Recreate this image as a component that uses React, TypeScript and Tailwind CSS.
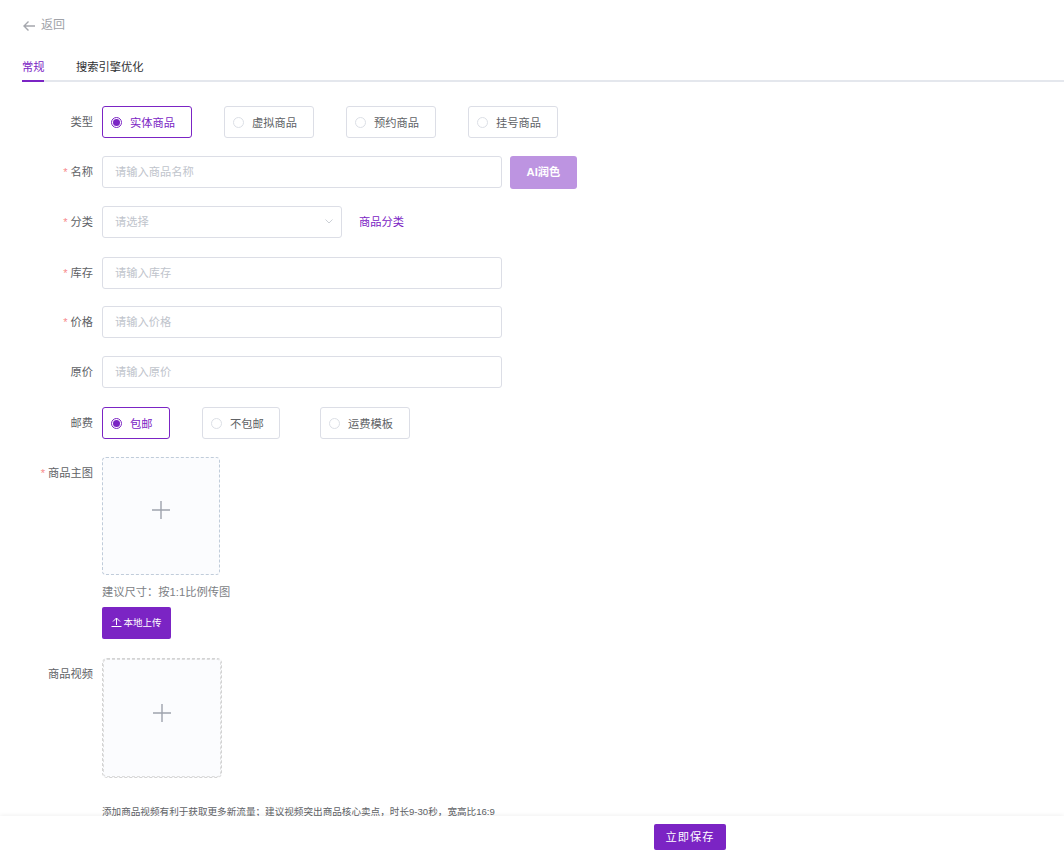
import React from "react";

function Req() {
  return <span className="mr-[3px] text-[#f78989] text-[11px]">*</span>;
}

function Label({ req, children }: { req?: boolean; children: React.ReactNode }) {
  return (
    <div className="w-[71px] shrink-0 mr-[9px] text-right text-[11.25px] leading-[16px] text-[#606266] pt-[8px] whitespace-nowrap">
      {req && <Req />}
      {children}
    </div>
  );
}

function Radio({ label, active, w, mr }: { label: string; active?: boolean; w: string; mr: string }) {
  return (
    <div
      className={`h-[32px] ${w} ${mr} flex items-center pl-[8px] rounded-[3px] border text-[11.25px] ${
        active ? "border-[#7b24c4] text-[#7b24c4]" : "border-[#dcdee6] text-[#606266]"
      }`}
    >
      <span
        className={`w-[11px] h-[11px] rounded-full border flex items-center justify-center mr-[8px] ${
          active ? "border-[#7b24c4]" : "border-[#dcdfe6]"
        }`}
      >
        {active && <span className="w-[7px] h-[7px] rounded-full bg-[#7b24c4]" />}
      </span>
      <span className="pt-[3px]">{label}</span>
    </div>
  );
}

function Input({ ph, w = "w-[400px]" }: { ph: string; w?: string }) {
  return (
    <div className={`h-[32px] ${w} rounded-[3px] border border-[#dcdee6] bg-white flex items-center pl-[12px] pt-[1px] text-[11.25px] text-[#c0c4cc]`}>
      {ph}
    </div>
  );
}

function Plus() {
  return (
    <svg width="18" height="18" viewBox="0 0 18 18" className="text-[#9ea3ad]">
      <path d="M0 9h18M9 0v18" stroke="currentColor" strokeWidth="1.4" fill="none" />
    </svg>
  );
}

export default function App() {
  return (
    <div className="h-[858px] overflow-hidden relative bg-white font-['Liberation_Sans','Noto_Sans_CJK_SC',sans-serif]">
      <div className="pl-[22px]">
        <div className="pt-[16px] h-[50px] flex items-start text-[12px] text-[#a0a2a8]">
          <div className="flex items-center h-[18px]">
            <svg width="14" height="14" viewBox="0 0 14 14" className="mr-[5px] mt-[1px]" fill="none" stroke="#a5a7ad" strokeWidth="1.4">
              <path d="M13 7H2M6.5 2.5 2 7l4.5 4.5" />
            </svg>
            <span>返回</span>
          </div>
        </div>
        <div className="h-[32px] flex border-b-2 border-[#e4e7ed] text-[11.25px]">
          <div className="h-[32px] w-[22px] border-b-2 border-[#7b24c4] text-[#7b24c4] pt-[9px] leading-[16px] whitespace-nowrap">常规</div>
          <div className="ml-[32px] pt-[9px] leading-[16px] text-[#303133] whitespace-nowrap">搜索引擎优化</div>
        </div>
      </div>

      <div className="pl-[22px] pt-[24px]">
        <div className="flex mb-[18px]">
          <Label>类型</Label>
          <Radio label="实体商品" active w="w-[90px]" mr="mr-[32px]" />
          <Radio label="虚拟商品" w="w-[90px]" mr="mr-[32px]" />
          <Radio label="预约商品" w="w-[90px]" mr="mr-[32px]" />
          <Radio label="挂号商品" w="w-[90px]" mr="mr-[0px]" />
        </div>
        <div className="flex mb-[17px]">
          <Label req>名称</Label>
          <Input ph="请输入商品名称" />
          <div className="ml-[8px] w-[67px] h-[33px] rounded-[3px] bg-[#bd94e1] text-white text-[11.25px] font-semibold flex items-center justify-center">
            AI润色
          </div>
        </div>
        <div className="flex mb-[19px] items-start">
          <Label req>分类</Label>
          <div className="relative">
            <Input ph="请选择" w="w-[240px]" />
            <svg width="8" height="5" viewBox="0 0 8 5" className="absolute right-[9px] top-[13px]" fill="none" stroke="#ccd0d6" strokeWidth="1">
              <path d="M0.5 0.5 4 4l3.5-3.5" />
            </svg>
          </div>
          <div className="ml-[17px] pt-[8px] leading-[16px] text-[11.25px] text-[#7b24c4]">商品分类</div>
        </div>
        <div className="flex mb-[17px]">
          <Label req>库存</Label>
          <Input ph="请输入库存" />
        </div>
        <div className="flex mb-[18px]">
          <Label req>价格</Label>
          <Input ph="请输入价格" />
        </div>
        <div className="flex mb-[19px]">
          <Label>原价</Label>
          <Input ph="请输入原价" />
        </div>
        <div className="flex mb-[18px]">
          <Label>邮费</Label>
          <Radio label="包邮" active w="w-[68px]" mr="mr-[32px]" />
          <Radio label="不包邮" w="w-[78px]" mr="mr-[40px]" />
          <Radio label="运费模板" w="w-[90px]" mr="mr-[0px]" />
        </div>
        <div className="flex mb-[19px]">
          <Label req>商品主图</Label>
          <div>
            <div className="w-[118px] h-[118px] pb-[12px] rounded-[4px] border border-dashed border-[#c0ccda] bg-[#fbfcfe] flex items-center justify-center">
              <Plus />
            </div>
            <div className="mt-[9px] h-[16px] leading-[16px] text-[11.25px] text-[#7d7f85] whitespace-nowrap">建议尺寸：按1:1比例传图</div>
            <div className="mt-[7px] w-[69px] h-[32px] rounded-[2px] bg-[#7b24c4] text-white text-[9.5px] flex items-center justify-center">
              <svg width="11" height="12" viewBox="0 0 11 12" className="mr-[1px]" fill="none" stroke="#fff" strokeWidth="1">
                <path d="M0.5 9.5h10M5.5 8V1M2 4.5 5.5 1 9 4.5" />
              </svg>
              本地上传
            </div>
          </div>
        </div>
        <div className="flex">
          <Label>商品视频</Label>
          <div>
            <div className="w-[120px] h-[120px] pb-[10px] rounded-[5px] border border-dashed border-[#d4d4d4] outline outline-dashed outline-[#dddddd] outline-offset-[-2px] bg-[#fbfcfe] flex items-center justify-center">
              <Plus />
            </div>
            <div className="mt-[27px] whitespace-nowrap h-[14px] leading-[14px] text-[9.6px] text-[#606266]">
              添加商品视频有利于获取更多新流量；建议视频突出商品核心卖点，时长9-30秒，宽高比16:9
            </div>
          </div>
        </div>
      </div>

      <div className="absolute left-0 right-0 bottom-0 h-[42px] bg-white shadow-[0_-1px_4px_rgba(0,0,0,0.06)] flex items-center pl-[654px]">
        <div className="w-[72px] h-[26px] rounded-[2px] bg-[#7b24c4] text-white text-[11.25px] tracking-[1px] flex items-center justify-center">
          立即保存
        </div>
      </div>
    </div>
  );
}
